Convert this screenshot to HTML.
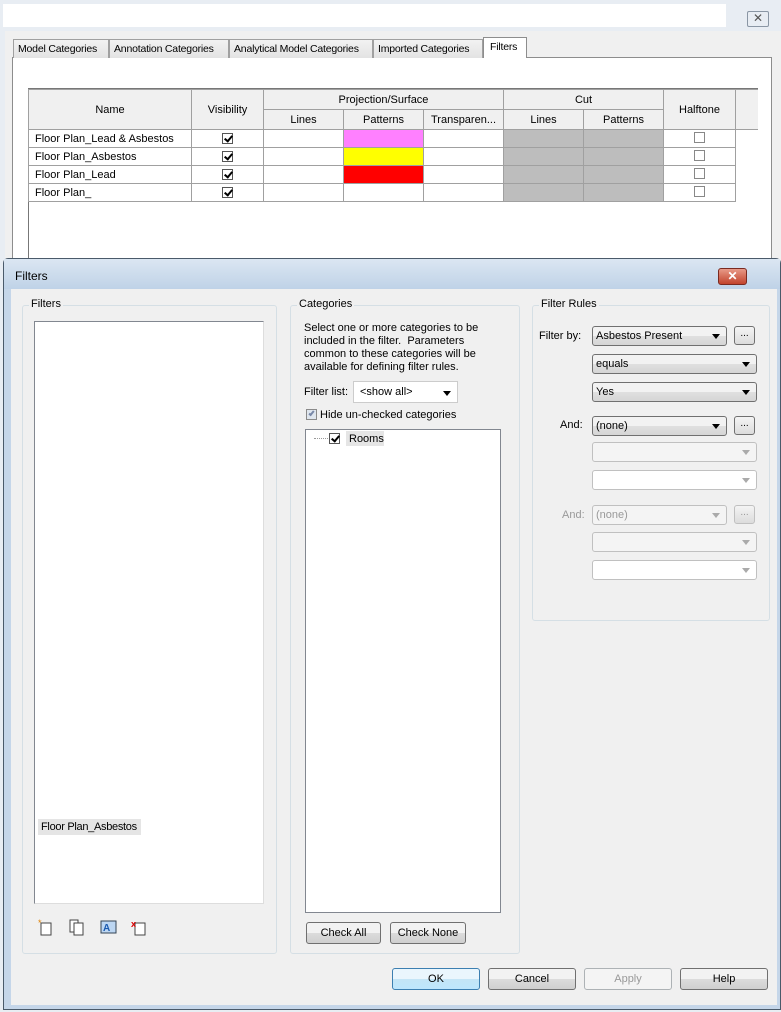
<!DOCTYPE html>
<html><head><meta charset="utf-8"><style>
*{box-sizing:border-box;margin:0;padding:0}
body{width:781px;height:1012px;position:relative;overflow:hidden;background:#e8edf3;font-family:"Liberation Sans",sans-serif;font-size:11px;color:#000}
.a{position:absolute;white-space:nowrap}
.tab{position:absolute;top:39px;height:19px;border:1px solid #a0a0a0;border-bottom:none;background:linear-gradient(#f2f2f2,#e3e3e3);padding:3px 0 0 4px;font-size:10.5px;white-space:nowrap;overflow:hidden;letter-spacing:-0.2px}
table{border-collapse:collapse;position:absolute;left:28px;top:89px;table-layout:fixed}
td{border:1px solid #a0a0a0;height:18px;font-size:11px;padding:0 6px;white-space:nowrap;overflow:hidden}
th{border:1px solid #a0a0a0;background:#f0f0f0;font-weight:normal;font-size:11px;height:20px;padding:0}
.cb{display:inline-block;width:11px;height:11px;border:1px solid #555;position:relative;vertical-align:middle;background:#fff}
.cb.k:after{content:"";position:absolute;left:3px;top:0px;width:3px;height:6px;border:solid #000;border-width:0 2px 2px 0;transform:rotate(40deg)}
.ub{display:inline-block;width:11px;height:11px;border:1px solid #888;background:#fff}
.hat{background:#bdbdbd}
.grp{position:absolute;border:1px solid #d5dfe5;border-radius:3px}
.gl{position:absolute;top:-8px;left:6px;background:#f0f0f0;padding:0 2px;font-size:11px}
.btn{position:absolute;height:22px;border:1px solid #707070;border-radius:3px;background:linear-gradient(#f2f2f2 50%,#dcdcdc 50%,#cfcfcf);text-align:center;font-size:11px;line-height:20px}
.cmb{position:absolute;height:20px;border:1px solid #707070;border-radius:3px;background:linear-gradient(#f2f2f2 50%,#e0e0e0 50%,#d5d5d5);font-size:11px;line-height:18px;padding-left:3px}
.cmb:after{content:"";position:absolute;right:6px;top:7px;border:4px solid transparent;border-top:5px solid #000}
.dis{border-color:#c0c0c0;background:#f4f4f4;color:#999}
.dis:after{border-top-color:#aaa}
.dot{position:absolute;width:21px;height:19px;border:1px solid #707070;border-radius:3px;background:linear-gradient(#f4f4f4,#dcdcdc);text-align:center;font-size:10px;line-height:14px}
</style></head><body>
<div class="a" style="left:3px;top:4px;width:723px;height:23px;background:#fff"></div>
<div class="a" style="left:747px;top:11px;width:22px;height:16px;border:1px solid #8a96a4;border-radius:2px;background:#e8edf3;text-align:center;font-size:12px;line-height:13px;color:#555">✕</div>
<div class="a" style="left:5px;top:31px;width:776px;height:240px;background:#f0f0f0"></div>
<div class="a" style="left:12px;top:57px;width:760px;height:210px;background:#fff;border:1px solid #8d8d8d"></div>
<div class="tab" style="left:13px;width:96px">Model Categories</div>
<div class="tab" style="left:109px;width:120px">Annotation Categories</div>
<div class="tab" style="left:229px;width:144px">Analytical Model Categories</div>
<div class="tab" style="left:373px;width:110px">Imported Categories</div>
<div class="tab" style="left:483px;top:37px;width:44px;height:21px;background:#fff;border-color:#8d8d8d;padding:3px 0 0 6px">Filters</div>
<div class="a" style="left:28px;top:89px;width:1px;height:175px;background:#777"></div>
<div class="a" style="left:28px;top:88px;width:730px;height:2px;background:#777"></div>
<table>
<colgroup><col style="width:163px"><col style="width:72px"><col style="width:80px"><col style="width:80px"><col style="width:80px"><col style="width:80px"><col style="width:80px"><col style="width:72px"><col style="width:22px"></colgroup>
<tr><th rowspan="2" style="height:40px">Name</th><th rowspan="2">Visibility</th><th colspan="3">Projection/Surface</th><th colspan="2">Cut</th><th rowspan="2">Halftone</th><th rowspan="2" style="border-right:none"></th></tr>
<tr><th>Lines</th><th>Patterns</th><th>Transparen...</th><th>Lines</th><th>Patterns</th></tr>
<tr><td>Floor Plan_Lead &amp; Asbestos</td><td style="text-align:center"><span class="cb k"></span></td><td></td><td style="background:#ff80ff"></td><td></td><td class="hat"></td><td class="hat"></td><td style="text-align:center"><span class="ub"></span></td><td style="border:none"></td></tr>
<tr><td>Floor Plan_Asbestos</td><td style="text-align:center"><span class="cb k"></span></td><td></td><td style="background:#ffff00"></td><td></td><td class="hat"></td><td class="hat"></td><td style="text-align:center"><span class="ub"></span></td><td style="border:none"></td></tr>
<tr><td>Floor Plan_Lead</td><td style="text-align:center"><span class="cb k"></span></td><td></td><td style="background:#ff0000"></td><td></td><td class="hat"></td><td class="hat"></td><td style="text-align:center"><span class="ub"></span></td><td style="border:none"></td></tr>
<tr><td>Floor Plan_</td><td style="text-align:center"><span class="cb k"></span></td><td></td><td></td><td></td><td class="hat"></td><td class="hat"></td><td style="text-align:center"><span class="ub"></span></td><td style="border:none"></td></tr>
</table>
<div class="a" style="left:3px;top:258px;width:778px;height:752px;background:#c5d6e9;border:1px solid #4a5a6a;border-radius:5px 5px 0 0"></div>
<div class="a" style="left:4px;top:259px;width:776px;height:30px;background:linear-gradient(#dbe6f2,#bfd2e7)"></div>
<div class="a" style="left:15px;top:269px;font-size:12px">Filters</div>
<div class="a" style="left:718px;top:268px;width:29px;height:17px;border:1px solid #7a2a20;border-radius:3px;background:linear-gradient(#e89a88,#c2432c);color:#fff;text-align:center;font-size:12px;line-height:15px;font-weight:bold">✕</div>
<div class="a" style="left:11px;top:289px;width:766px;height:716px;background:#f0f0f0"></div>

<div class="grp" style="left:22px;top:305px;width:255px;height:649px"><span class="gl">Filters</span></div>
<div class="a" style="left:34px;top:321px;width:230px;height:583px;background:#fff;border:1px solid #828790;border-right-color:#ddd;border-bottom-color:#ddd"></div>
<div class="a" style="left:38px;top:819px;width:103px;height:16px;background:#e5e5e5;font-size:11px;padding:2px 3px;letter-spacing:-0.3px">Floor Plan_Asbestos</div>
<svg class="a" style="left:38px;top:918px" width="120" height="18">
<rect x="3" y="5" width="10" height="12" fill="#fff" stroke="#444"/><text x="0" y="8" font-size="9" fill="#e08000" font-family="Liberation Sans">*</text>
<rect x="32" y="2" width="8" height="12" fill="#fff" stroke="#444"/><rect x="36" y="5" width="9" height="12" fill="#fff" stroke="#444"/>
<rect x="63" y="3" width="15" height="12" fill="#bcd6f2" stroke="#345"/><text x="65" y="13" font-size="10" fill="#1a5ab0" font-family="Liberation Sans" font-weight="bold">A</text>
<rect x="97" y="5" width="10" height="12" fill="#fff" stroke="#444"/><text x="93" y="9" font-size="9" fill="#d00" font-family="Liberation Sans" font-weight="bold">x</text>
</svg>

<div class="grp" style="left:290px;top:305px;width:230px;height:649px"><span class="gl">Categories</span></div>
<div class="a" style="left:304px;top:322px;width:200px;font-size:11px;line-height:13px;white-space:normal">Select one or more categories to be included in the filter.&nbsp; Parameters common to these categories will be available for defining filter rules.</div>
<div class="a" style="left:304px;top:386px">Filter list:</div>
<div class="a" style="left:353px;top:381px;width:105px;height:22px;background:#fff;border:1px solid #ccc;padding:4px 0 0 6px;font-size:11px">&lt;show all&gt;<span style="position:absolute;right:6px;top:9px;border:4px solid transparent;border-top:5px solid #000"></span></div>
<div class="a" style="left:306px;top:409px;width:11px;height:11px;border:1px solid #8a8a8a;background:#dfe6ee"><span style="position:absolute;left:3px;top:0;width:3px;height:6px;border:solid #7888a8;border-width:0 2px 2px 0;transform:rotate(40deg)"></span></div>
<div class="a" style="left:320px;top:409px">Hide un-checked categories</div>
<div class="a" style="left:305px;top:429px;width:196px;height:484px;background:#fff;border:1px solid #828790"></div>
<div class="a" style="left:314px;top:438px;width:14px;border-top:1px dotted #999"></div>
<div class="a" style="left:329px;top:432px"><span class="cb k"></span></div>
<div class="a" style="left:346px;top:431px;width:38px;height:15px;background:#e5e5e5;padding:2px 3px">Rooms</div>
<div class="btn" style="left:306px;top:922px;width:75px">Check All</div>
<div class="btn" style="left:390px;top:922px;width:76px">Check None</div>

<div class="grp" style="left:532px;top:305px;width:238px;height:316px"><span class="gl">Filter Rules</span></div>
<div class="a" style="left:539px;top:330px">Filter by:</div>
<div class="cmb" style="left:592px;top:326px;width:135px">Asbestos Present</div>
<div class="dot" style="left:734px;top:326px">...</div>
<div class="cmb" style="left:592px;top:354px;width:165px">equals</div>
<div class="cmb" style="left:592px;top:382px;width:165px">Yes</div>
<div class="a" style="left:560px;top:419px">And:</div>
<div class="cmb" style="left:592px;top:416px;width:135px">(none)</div>
<div class="dot" style="left:734px;top:416px">...</div>
<div class="cmb dis" style="left:592px;top:442px;width:165px"></div>
<div class="cmb dis" style="left:592px;top:470px;width:165px;background:#fff"></div>
<div class="a" style="left:562px;top:509px;color:#999">And:</div>
<div class="cmb dis" style="left:592px;top:505px;width:135px">(none)</div>
<div class="dot" style="left:734px;top:505px;border-color:#c0c0c0;color:#999">...</div>
<div class="cmb dis" style="left:592px;top:532px;width:165px"></div>
<div class="cmb dis" style="left:592px;top:560px;width:165px;background:#fff"></div>

<div class="btn" style="left:392px;top:968px;width:88px;border-color:#3c7fb1;background:linear-gradient(#eaf6fd 50%,#c4e5f6 50%,#bee6fd)">OK</div>
<div class="btn" style="left:488px;top:968px;width:88px">Cancel</div>
<div class="btn" style="left:584px;top:968px;width:88px;border-color:#adb2b5;background:#f4f4f4;color:#999">Apply</div>
<div class="btn" style="left:680px;top:968px;width:88px">Help</div>
</body></html>
